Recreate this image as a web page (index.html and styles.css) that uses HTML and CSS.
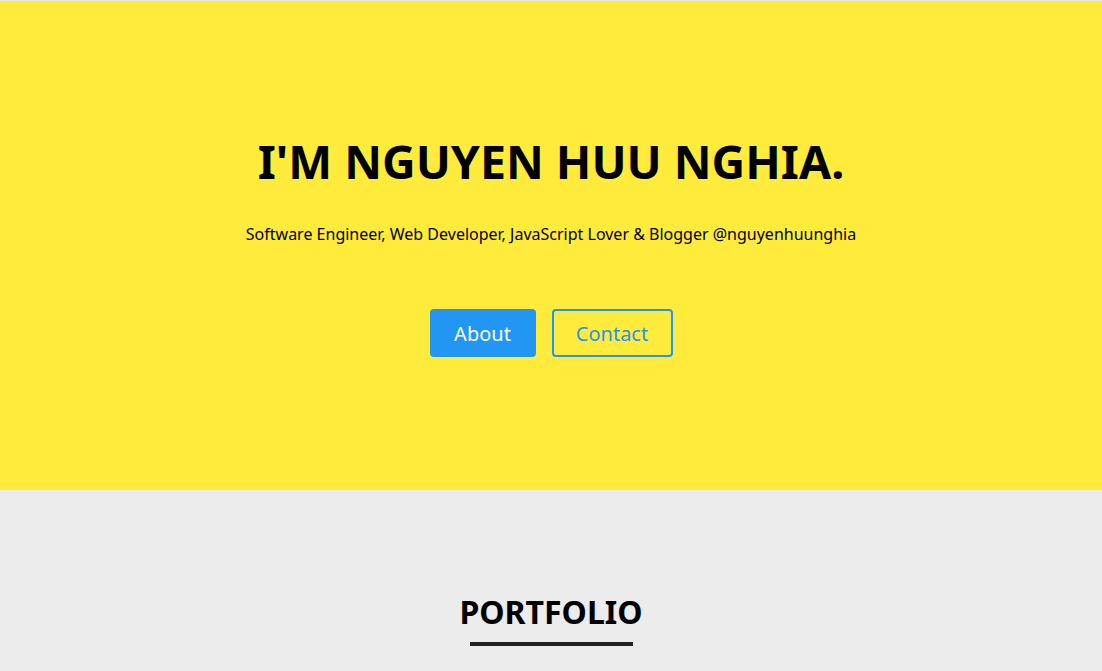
FILE: index.html
```html
<!DOCTYPE html>
<html>
<head>
<meta charset="utf-8">
<link rel="stylesheet" href="styles.css">
</head>
<body>
<header class="hero">
  <h1 class="hero-title">I'M NGUYEN HUU NGHIA.</h1>
  <p class="hero-sub">Software Engineer, Web Developer, JavaScript Lover &amp; Blogger @nguyenhuunghia</p>
  <div class="hero-actions">
    <a class="btn btn-fill" href="#">About</a>
    <a class="btn btn-outline" href="#">Contact</a>
  </div>
</header>
<section class="portfolio">
  <h2 class="section-title">PORTFOLIO</h2>
  <div class="section-rule"></div>
</section>
</body>
</html>
```
FILE: styles.css
```css
html, body {
  margin: 0;
  padding: 0;
}
body {
  background: #ececec;
  font-family: "Noto Sans", "Open Sans", sans-serif;
  color: #000;
  border-top: 1px solid #e6e6e6;
}
.hero {
  background: #ffeb3b;
  height: 489px;
  display: flex;
  flex-direction: column;
  align-items: center;
  box-sizing: border-box;
  padding-top: 128px;
}
.hero-title {
  margin: 0;
  font-size: 46.5px;
  font-weight: 700;
  line-height: 64px;
}
.hero-sub {
  margin: 30px 0 0;
  font-size: 16px;
  line-height: 22px;
}
.hero-actions {
  display: flex;
  gap: 16px;
  margin-top: 64px;
}
.btn {
  box-sizing: border-box;
  height: 48px;
  display: flex;
  align-items: center;
  justify-content: center;
  font-size: 20px;
  text-decoration: none;
  border-radius: 4px;
  border: 2px solid #2196f3;
}
.btn-fill {
  width: 106px;
  background: #2196f3;
  color: #fff;
}
.btn-outline {
  width: 121px;
  color: #2196f3;
  background: transparent;
}
.portfolio {
  display: flex;
  flex-direction: column;
  align-items: center;
  padding-top: 100px;
}
.section-title {
  margin: 0;
  font-size: 32px;
  font-weight: 700;
  line-height: 44px;
}
.section-rule {
  width: 163px;
  height: 4px;
  background: #222;
  margin-top: 8px;
}
```
